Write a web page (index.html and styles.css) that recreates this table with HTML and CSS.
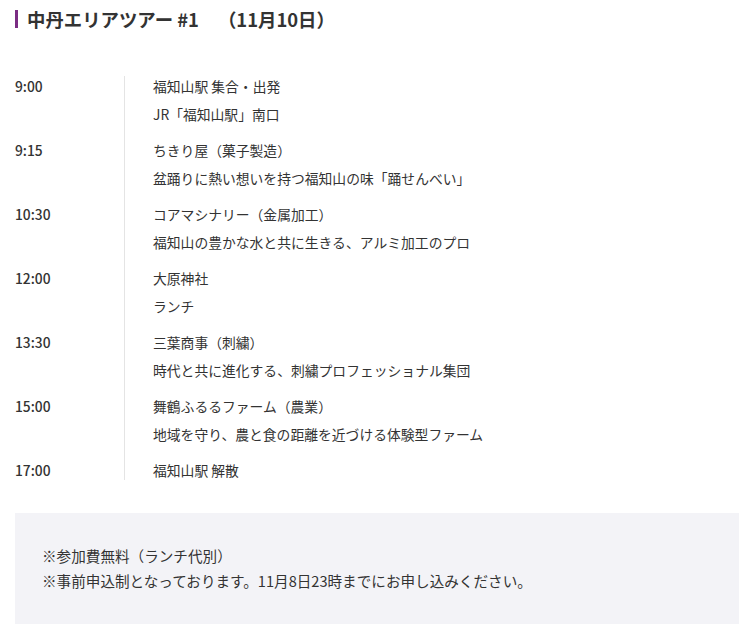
FILE: index.html
```html
<!DOCTYPE html>
<html lang="ja">
<head>
    <meta charset="UTF-8">
    <meta name="viewport" content="width=device-width, initial-scale=1.0">
    <title>中丹エリアツアー #1</title>
    <link rel="stylesheet" href="styles.css">
</head>
<body>
    <main class="page">
        <h2 class="tour-title">中丹エリアツアー #1<span class="tour-date">（11月10日）</span></h2>

        <dl class="schedule">
            <div class="schedule-row">
                <dt>9:00</dt>
                <dd>
                    <p>福知山駅 集合・出発</p>
                    <p>JR「福知山駅」南口</p>
                </dd>
            </div>
            <div class="schedule-row">
                <dt>9:15</dt>
                <dd>
                    <p>ちきり屋（菓子製造）</p>
                    <p>盆踊りに熱い想いを持つ福知山の味「踊せんべい」</p>
                </dd>
            </div>
            <div class="schedule-row">
                <dt>10:30</dt>
                <dd>
                    <p>コアマシナリー（金属加工）</p>
                    <p>福知山の豊かな水と共に生きる、アルミ加工のプロ</p>
                </dd>
            </div>
            <div class="schedule-row">
                <dt>12:00</dt>
                <dd>
                    <p>大原神社</p>
                    <p>ランチ</p>
                </dd>
            </div>
            <div class="schedule-row">
                <dt>13:30</dt>
                <dd>
                    <p>三葉商事（刺繍）</p>
                    <p>時代と共に進化する、刺繍プロフェッショナル集団</p>
                </dd>
            </div>
            <div class="schedule-row">
                <dt>15:00</dt>
                <dd>
                    <p>舞鶴ふるるファーム（農業）</p>
                    <p>地域を守り、農と食の距離を近づける体験型ファーム</p>
                </dd>
            </div>
            <div class="schedule-row">
                <dt>17:00</dt>
                <dd>
                    <p>福知山駅 解散</p>
                </dd>
            </div>
        </dl>

        <div class="notice">
            <p>※参加費無料（ランチ代別）</p>
            <p>※事前申込制となっております。11月8日23時までにお申し込みください。</p>
        </div>
    </main>
</body>
</html>
```

FILE: styles.css
```css
:root {
    --text: #333333;
    --accent: #7b2d83;
    --line: #e4e4e4;
    --notice-bg: #f3f3f7;
}

* {
    margin: 0;
    padding: 0;
    box-sizing: border-box;
}

body {
    font-family: "Noto Sans CJK JP", "Noto Sans", sans-serif;
    color: var(--text);
    background: #ffffff;
}

.page {
    width: 724px;
    margin-left: 15px;
    padding-top: 10px;
}

.tour-title {
    font-size: 18.4px;
    font-weight: 700;
    line-height: 18px;
    padding-left: 9px;
    border-left: 3px solid var(--accent);
}

.tour-date {
    margin-left: 19px;
}

.schedule {
    display: flex;
    flex-direction: column;
    gap: 16px;
    margin-top: 48px;
    font-size: 13.8px;
    line-height: 20px;
}

.schedule-row {
    display: flex;
}

.schedule-row dt {
    width: 109px;
    flex-shrink: 0;
    font-weight: 500;
}

.schedule-row dd {
    flex: 1;
    display: flex;
    flex-direction: column;
    gap: 8px;
    padding-left: 28px;
    border-left: 1px solid var(--line);
    position: relative;
}

.schedule-row + .schedule-row dd::before {
    content: "";
    position: absolute;
    left: -1px;
    top: -16px;
    height: 16px;
    border-left: 1px solid var(--line);
}

.notice {
    margin-top: 33px;
    padding: 30px 27px 31px;
    background: var(--notice-bg);
    font-size: 14.6px;
    line-height: 25px;
}
```
